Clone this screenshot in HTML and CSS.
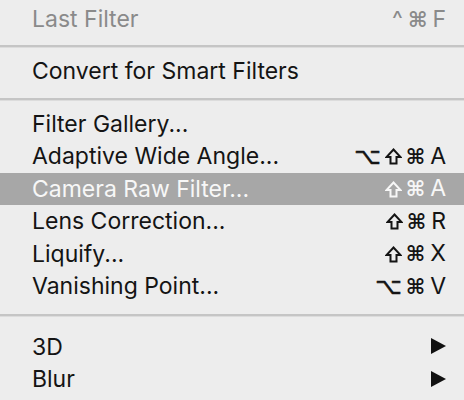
FILE: index.html
```html
<!DOCTYPE html>
<html>
<head>
<meta charset="utf-8">
<link rel="stylesheet" href="styles.css">
</head>
<body>
<div class="menu">
  <div class="item disabled"><span class="label">Last Filter</span><span class="keys"><span class="sym caret">^</span><span class="sym">⌘</span><span class="key">F</span></span></div>
  <div class="sep"></div>
  <div class="item"><span class="label">Convert for Smart Filters</span></div>
  <div class="sep"></div>
  <div class="item"><span class="label">Filter Gallery...</span></div>
  <div class="item"><span class="label">Adaptive Wide Angle...</span><span class="keys"><span class="sym opt">⌥</span><svg class="shift" width="17" height="17" viewBox="0 0 17 17"><polygon points="8.5,1.5 15.5,9 11.5,9 11.5,15.5 5.5,15.5 5.5,9 1.5,9"/></svg><span class="sym">⌘</span><span class="key">A</span></span></div>
  <div class="item active"><span class="label">Camera Raw Filter...</span><span class="keys"><svg class="shift" width="17" height="17" viewBox="0 0 17 17"><polygon points="8.5,1.5 15.5,9 11.5,9 11.5,15.5 5.5,15.5 5.5,9 1.5,9"/></svg><span class="sym">⌘</span><span class="key">A</span></span></div>
  <div class="item"><span class="label">Lens Correction...</span><span class="keys"><svg class="shift" width="17" height="17" viewBox="0 0 17 17"><polygon points="8.5,1.5 15.5,9 11.5,9 11.5,15.5 5.5,15.5 5.5,9 1.5,9"/></svg><span class="sym">⌘</span><span class="key">R</span></span></div>
  <div class="item"><span class="label">Liquify...</span><span class="keys"><svg class="shift" width="17" height="17" viewBox="0 0 17 17"><polygon points="8.5,1.5 15.5,9 11.5,9 11.5,15.5 5.5,15.5 5.5,9 1.5,9"/></svg><span class="sym">⌘</span><span class="key">X</span></span></div>
  <div class="item"><span class="label">Vanishing Point...</span><span class="keys"><span class="sym opt">⌥</span><span class="sym">⌘</span><span class="key">V</span></span></div>
  <div class="sep sep-wide"></div>
  <div class="item"><span class="label">3D</span><svg class="arrow" width="15" height="16" viewBox="0 0 15 16"><polygon points="0,0 15,8 0,16"/></svg></div>
  <div class="item"><span class="label">Blur</span><svg class="arrow" width="15" height="16" viewBox="0 0 15 16"><polygon points="0,0 15,8 0,16"/></svg></div>
</div>
</body>
</html>
```
FILE: styles.css
```css
html, body {
  margin: 0;
  padding: 0;
  background: #ededed;
}
.menu {
  width: 464px;
  height: 400px;
  padding-top: 3px;
  box-sizing: border-box;
  font-family: Inter, "Liberation Sans", sans-serif;
  font-size: 23px;
  color: #141414;
  overflow: hidden;
}
.item {
  display: flex;
  align-items: center;
  justify-content: space-between;
  height: 32.5px;
  line-height: 32px;
  padding: 0 18px 0 32px;
}
.item.disabled {
  color: #8a8a8a;
  height: 32px;
}
.item.active {
  background: #a7a7a7;
  color: #f7f7f7;
}
.keys {
  display: flex;
  align-items: baseline;
  gap: 4px;
}
.sym {
  font-family: "DejaVu Sans", sans-serif;
  font-weight: bold;
  font-size: 21px;
}
.sym.opt {
  font-weight: normal;
  font-size: 23px;
  -webkit-text-stroke: 0.6px currentColor;
}
.caret {
  font-family: Inter, sans-serif;
  font-weight: normal;
  font-size: 23px;
  -webkit-text-stroke: 0;
  margin-right: 1px;
}
.shift {
  align-self: center;
  margin-top: 1px;
  fill: none;
  stroke: currentColor;
  stroke-width: 2;
  stroke-linejoin: miter;
}
.key {
  margin-left: 1px;
}
.arrow {
  fill: #111;
  margin-top: -1px;
}
.sep {
  height: 20px;
  box-sizing: border-box;
  padding-top: 10px;
}
.sep::before {
  content: "";
  display: block;
  height: 2px;
  background: #c5c5c5;
  border-bottom: 1px solid #dcdcdc;
}
.sep-wide {
  height: 28px;
  padding-top: 11px;
}
```
